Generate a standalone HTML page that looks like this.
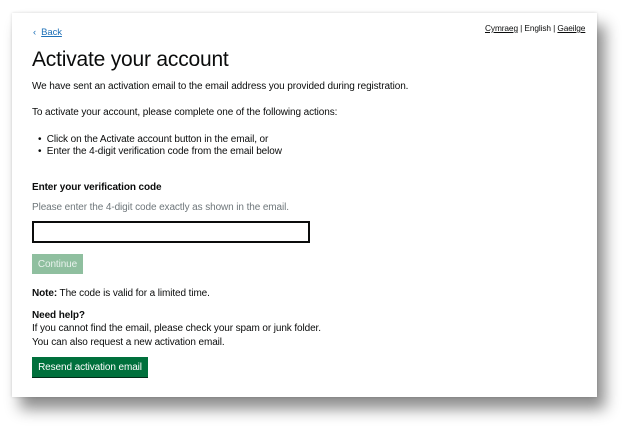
<!DOCTYPE html>
<html><head><style>
body{margin:0;width:633px;height:433px;background:#fff;font-family:"Liberation Sans",Arial,sans-serif;position:relative;overflow:hidden;color:#0b0c0c}
.card{position:absolute;left:12px;top:13px;width:585px;height:384px;background:#fff;box-shadow:8px 12px 14px rgba(0,0,0,.45),0 0 3px rgba(0,0,0,.15)}
.t{position:absolute;white-space:nowrap;font-size:10px;letter-spacing:-0.1px}
</style></head><body>
<div class="card"></div>
<div class="t" style="left:33px;top:27px;font-size:9.5px;color:#1d70b8">&lsaquo;&nbsp; <u>Back</u></div>
<div class="t" style="left:485px;top:23px;font-size:8.3px"><u>Cymraeg</u> | English | <u>Gaeilge</u></div>
<div class="t" style="left:32px;top:48px;font-size:21px;letter-spacing:-0.2px">Activate your account</div>
<div class="t" style="left:32px;top:81px">We have sent an activation email to the email address you provided during registration.</div>
<div class="t" style="left:32px;top:107px">To activate your account, please complete one of the following actions:</div>
<div class="t" style="left:38px;top:134px">&bull;&nbsp; Click on the Activate account button in the email, or</div>
<div class="t" style="left:38px;top:146px">&bull;&nbsp; Enter the 4-digit verification code from the email below</div>
<div class="t" style="left:32px;top:182px;font-weight:bold">Enter your verification code</div>
<div class="t" style="left:32px;top:202px;color:#6f777b">Please enter the 4-digit code exactly as shown in the email.</div>
<div style="position:absolute;left:32px;top:221px;width:274px;height:18px;border:2px solid #0b0c0c"></div>
<div class="t" style="left:32px;top:254px;width:51px;height:20px;background:#8fbf9f;color:#e8f2ec;text-align:center;line-height:21px">Continue</div>
<div class="t" style="left:32px;top:288px"><b>Note:</b> The code is valid for a limited time.</div>
<div class="t" style="left:32px;top:310px;font-weight:bold">Need help?</div>
<div class="t" style="left:32px;top:323px">If you cannot find the email, please check your spam or junk folder.</div>
<div class="t" style="left:32px;top:337px">You can also request a new activation email.</div>
<div class="t" style="left:32px;top:357px;width:116px;height:20px;background:#00703c;color:#fff;text-align:center;line-height:21px;box-shadow:0 1px 0 #002d18">Resend activation email</div>
</body></html>
